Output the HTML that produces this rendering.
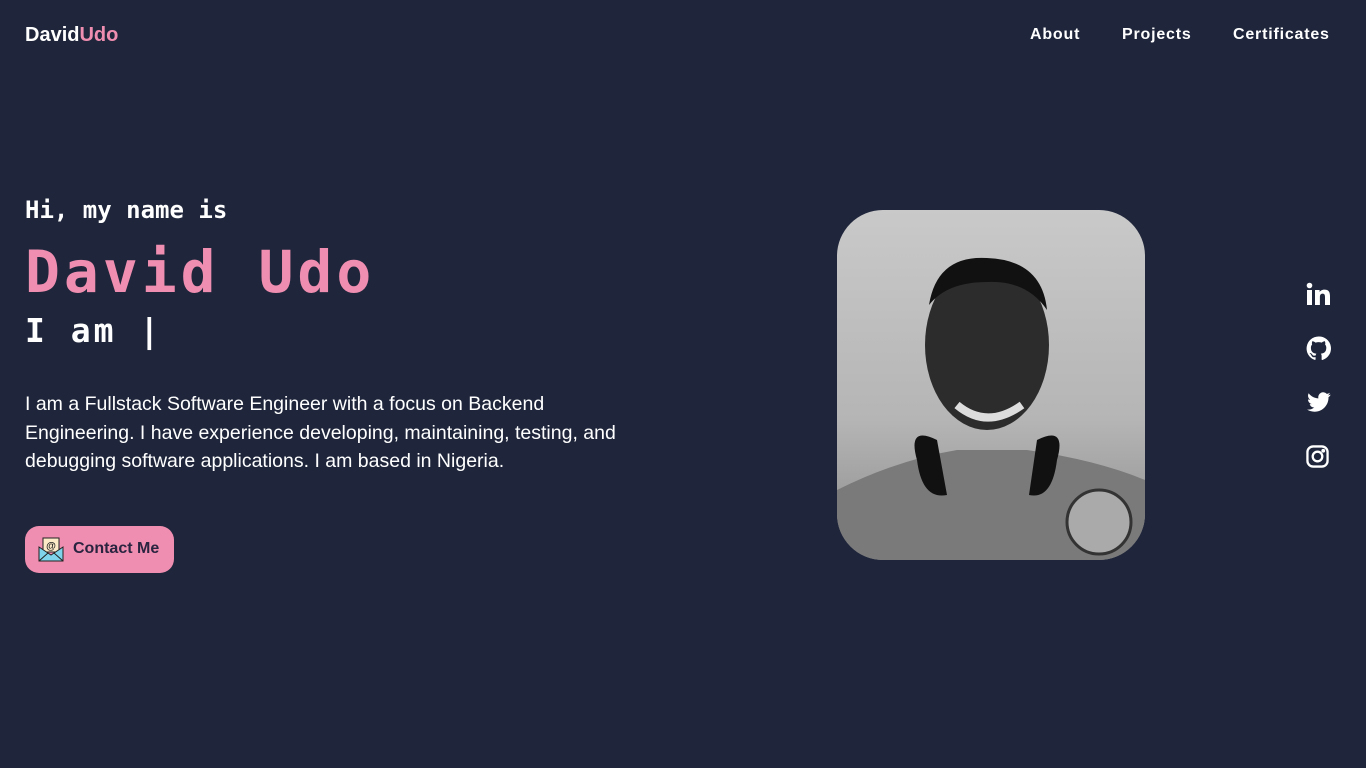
<!DOCTYPE html>
<html><head><meta charset="utf-8"><style>
*{margin:0;padding:0;box-sizing:border-box}
body{width:1366px;height:768px;background:#1f263b;color:#fff;font-family:"Liberation Sans",sans-serif;position:relative;overflow:hidden}
.logo{position:absolute;left:25px;top:24px;font-size:20px;font-weight:bold}
.logo span{color:#ef8eb0}
.nav{position:absolute;top:26px;font-size:16px;font-weight:bold;letter-spacing:.8px}
.mono{font-family:"DejaVu Sans Mono","Liberation Mono",monospace;font-weight:bold;position:absolute;left:25px;white-space:nowrap}
.p{position:absolute;left:25px;top:390px;width:620px;font-size:19.5px;line-height:28.7px}
.btn{position:absolute;left:25px;top:526px;width:149px;height:47px;background:#ef8eb0;border-radius:14px;color:#2a2440;font-weight:bold;font-size:16px}
.photo{position:absolute;left:837px;top:210px;width:308px;height:350px;border-radius:46px;overflow:hidden;background:linear-gradient(180deg,#c9c9c9,#b5b5b5 60%,#8a8a8a)}
.ic{position:absolute;left:1306px}
</style></head><body>
<div class="logo">David<span>Udo</span></div>
<div class="nav" style="left:1030px">About</div>
<div class="nav" style="left:1122px">Projects</div>
<div class="nav" style="left:1233px">Certificates</div>
<div class="mono" style="top:196px;font-size:24px">Hi, my name is</div>
<div class="mono" style="top:238px;font-size:58px;letter-spacing:4px;color:#ef8eb0">David Udo</div>
<div class="mono" style="top:311px;font-size:33px;letter-spacing:3px">I am |</div>
<div class="p">I am a Fullstack Software Engineer with a focus on Backend Engineering. I have experience developing, maintaining, testing, and debugging software applications. I am based in Nigeria.</div>
<div class="btn">
<svg style="position:absolute;left:13px;top:10px" width="26" height="26" viewBox="0 0 26 26"><rect x="5" y="2" width="16" height="14" fill="#fdebc8" stroke="#222"/><text x="13" y="13" font-size="10" text-anchor="middle" fill="#222" font-family="Liberation Sans">@</text><path d="M1 11 L13 19 L25 11 V25 H1Z" fill="#7fd3ea" stroke="#222"/><path d="M1 25 L10 17 M25 25 L16 17" stroke="#222"/></svg>
<span style="position:absolute;left:48px;top:14px">Contact Me</span></div>
<div class="photo">
<svg width="308" height="350" viewBox="0 0 308 350">
<path d="M0 280 Q60 250 120 240 L190 240 Q260 250 308 270 V350 H0Z" fill="#7a7a7a"/>
<ellipse cx="150" cy="135" rx="62" ry="85" fill="#2c2c2c"/>
<path d="M92 95 Q100 45 150 48 Q205 50 210 100 Q190 70 150 72 Q110 72 92 95Z" fill="#111"/>
<path d="M120 195 Q150 220 185 195" stroke="#ddd" stroke-width="8" fill="none"/>
<path d="M80 250 Q70 215 100 230 L110 285 Q85 290 80 250Z M220 250 Q230 215 200 230 L192 285 Q215 290 220 250Z" fill="#111"/>
<circle cx="262" cy="312" r="32" fill="#aaa" stroke="#333" stroke-width="3"/>
</svg></div>
<svg class="ic" style="top:282px" width="24" height="24" viewBox="0 0 24 24" fill="#fff"><rect x="1" y="8" width="5" height="15"/><circle cx="3.5" cy="3.5" r="2.8"/><path d="M9 8h4.6v2.1c.7-1.3 2.3-2.5 4.8-2.5 4.8 0 5.6 3 5.6 7V23h-5v-7.4c0-1.8 0-4-2.4-4s-2.7 1.9-2.7 3.9V23H9z"/></svg>
<svg class="ic" style="top:336px" width="25" height="25" viewBox="0 0 24 24" fill="#fff"><path d="M12 .5a11.5 11.5 0 0 0-3.6 22.4c.6.1.8-.3.8-.6v-2c-3.2.7-3.900-1.500-3.900-1.500-.5-1.3-1.3-1.7-1.3-1.7-1-.7.1-.7.1-.7 1.2.1 1.8 1.2 1.8 1.2 1 1.8 2.7 1.3 3.4 1 .1-.8.4-1.3.7-1.6-2.6-.3-5.3-1.3-5.3-5.7 0-1.3.5-2.3 1.2-3.1-.1-.3-.5-1.5.1-3.1 0 0 1-.3 3.2 1.2a11 11 0 0 1 5.8 0c2.2-1.5 3.2-1.2 3.2-1.2.6 1.6.2 2.8.1 3.1.8.8 1.2 1.9 1.2 3.1 0 4.4-2.7 5.4-5.3 5.7.4.4.8 1.1.8 2.2v3.2c0 .3.2.7.8.6A11.5 11.5 0 0 0 12 .5z"/></svg>
<svg class="ic" style="top:390px" width="26" height="24" viewBox="0 0 24 24" fill="#fff"><path d="M23.6 4.6c-.9.4-1.8.6-2.8.8 1-.6 1.8-1.6 2.1-2.7-.9.6-2 1-3.1 1.2a4.9 4.9 0 0 0-8.4 4.5C7.4 8.2 3.8 6.3 1.7 3.3c-1.3 2.2-.6 5.1 1.5 6.5-.8 0-1.6-.2-2.2-.6 0 2.4 1.7 4.4 3.9 4.8-.7.2-1.5.2-2.2.1.6 2 2.4 3.4 4.6 3.4A9.9 9.9 0 0 1 0 19.5 13.9 13.9 0 0 0 7.5 21.7c9.1 0 14.3-7.7 14-14.6 1-.7 1.8-1.5 2.1-2.5z"/></svg>
<svg class="ic" style="top:445px" width="23" height="23" viewBox="0 0 24 24" fill="none" stroke="#fff" stroke-width="2.4"><rect x="1.5" y="1.5" width="21" height="21" rx="6"/><circle cx="12" cy="12" r="5"/><circle cx="18" cy="6" r=".8" fill="#fff"/></svg>
</body></html>
